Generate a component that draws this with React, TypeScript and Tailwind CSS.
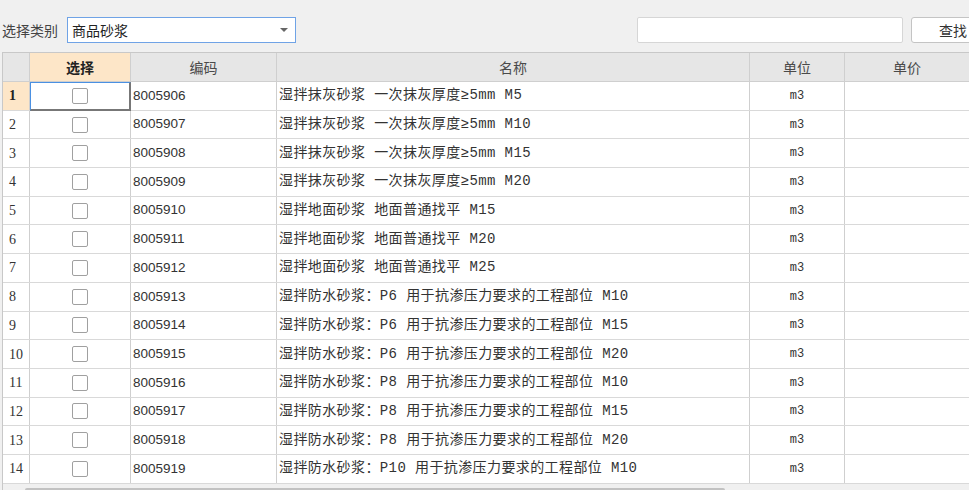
const rows = [
  { code: '8005906', name: '湿拌抹灰砂浆 一次抹灰厚度≥5mm M5' },
  { code: '8005907', name: '湿拌抹灰砂浆 一次抹灰厚度≥5mm M10' },
  { code: '8005908', name: '湿拌抹灰砂浆 一次抹灰厚度≥5mm M15' },
  { code: '8005909', name: '湿拌抹灰砂浆 一次抹灰厚度≥5mm M20' },
  { code: '8005910', name: '湿拌地面砂浆 地面普通找平 M15' },
  { code: '8005911', name: '湿拌地面砂浆 地面普通找平 M20' },
  { code: '8005912', name: '湿拌地面砂浆 地面普通找平 M25' },
  { code: '8005913', name: '湿拌防水砂浆：P6 用于抗渗压力要求的工程部位 M10' },
  { code: '8005914', name: '湿拌防水砂浆：P6 用于抗渗压力要求的工程部位 M15' },
  { code: '8005915', name: '湿拌防水砂浆：P6 用于抗渗压力要求的工程部位 M20' },
  { code: '8005916', name: '湿拌防水砂浆：P8 用于抗渗压力要求的工程部位 M10' },
  { code: '8005917', name: '湿拌防水砂浆：P8 用于抗渗压力要求的工程部位 M15' },
  { code: '8005918', name: '湿拌防水砂浆：P8 用于抗渗压力要求的工程部位 M20' },
  { code: '8005919', name: '湿拌防水砂浆：P10 用于抗渗压力要求的工程部位 M10' },
];

const cjk = "font-['Noto_Sans_CJK_SC',sans-serif]";

export default function App() {
  return (
    <div className={`w-[969px] h-[490px] overflow-hidden bg-[#f0f0f0] text-[#333] ${cjk}`}>
      {/* toolbar */}
      <div className="h-[52px] flex items-center pt-[8px] whitespace-nowrap">
        <span className="w-[67px] shrink-0 pl-[2px] text-[14px] text-[#444] leading-none">选择类别</span>
        <div className="w-[229px] shrink-0 h-[26px] bg-white border border-[#6fa3e6] flex items-center pl-[4px] pr-[6px]">
          <span className="flex-1 text-[14px] text-[#222] leading-none">商品砂浆</span>
          <svg width="8" height="5" viewBox="0 0 8 5" className="mr-[1px]">
            <path d="M0 0 L8 0 L4 4 Z" fill="#666" />
          </svg>
        </div>
        <div className="ml-[341px] w-[266px] shrink-0 h-[26px] bg-white border border-[#d6d6d6] rounded-[2px]" />
        <button className="ml-[8px] w-[64px] shrink-0 h-[26px] bg-white border border-[#c4c4c4] rounded-[3px] text-[14px] text-[#333] leading-none pl-[27px] text-left">
          查找
        </button>
      </div>

      {/* grid */}
      <div className="ml-[2px] border-l border-t border-[#c8c8c8] bg-white">
        <div className="flex h-[29px] bg-[#e6e6e6] text-[14px] text-[#4a4a4a] border-b border-[#cfcfcf]">
          <div className="w-[27px] shrink-0 border-r border-[#cfcfcf]" />
          <div className="w-[101px] shrink-0 border-r border-[#cfcfcf] bg-[#fde6c8] flex items-center justify-center font-bold text-[#222]">选择</div>
          <div className="w-[146px] shrink-0 border-r border-[#cfcfcf] flex items-center justify-center">编码</div>
          <div className="w-[473px] shrink-0 border-r border-[#cfcfcf] flex items-center justify-center">名称</div>
          <div className="w-[95px] shrink-0 border-r border-[#cfcfcf] flex items-center justify-center">单位</div>
          <div className="flex-1 flex items-center justify-center">单价</div>
        </div>
        {rows.map((r, i) => {
          const sel = i === 0;
          return (
            <div key={r.code} className="flex h-[28.7px] border-b border-[#d9d9d9] text-[13px]">
              <div
                className={`w-[27px] shrink-0 border-r border-[#cfcfcf] flex items-center pl-[6px] font-['Liberation_Serif',serif] text-[14px] ${
                  sel ? 'bg-[#fde6c8] font-bold text-[#222]' : 'bg-white text-[#333]'
                }`}
              >
                {i + 1}
              </div>
              <div
                className={`w-[101px] shrink-0 flex items-center justify-center ${
                  sel
                    ? 'border-l border-t border-l-[#4a90e2] border-t-[#4a90e2] border-r-2 border-b-2 border-r-[#777] border-b-[#777] -mb-[1px]'
                    : 'border-r border-[#cfcfcf]'
                }`}
              >
                <div className="w-[16px] h-[16px] rounded-[2px] border border-[#a0a0a0] bg-white" />
              </div>
              <div className="w-[146px] shrink-0 border-r border-[#cfcfcf] flex items-center pl-[2px] font-['Liberation_Sans',sans-serif] text-[13.5px] text-[#333]">
                {r.code}
              </div>
              <div className="w-[473px] shrink-0 border-r border-[#cfcfcf] flex items-center pl-[2px] text-[14px] tracking-[0.4px] text-[#333] whitespace-nowrap overflow-hidden font-['Liberation_Mono','Noto_Sans_CJK_SC',monospace]">
                {r.name}
              </div>
              <div className="w-[95px] shrink-0 border-r border-[#cfcfcf] flex items-center justify-center font-['Liberation_Mono',monospace] text-[12px] text-[#333]">
                m3
              </div>
              <div className="flex-1" />
            </div>
          );
        })}
        {/* horizontal scrollbar */}
        <div className="h-[8px] bg-[#f0f0f0] flex items-end pl-[22px]">
          <div className="w-[700px] h-[4px] bg-[#c2c2c2] rounded-[2px]" />
        </div>
      </div>
    </div>
  );
}
